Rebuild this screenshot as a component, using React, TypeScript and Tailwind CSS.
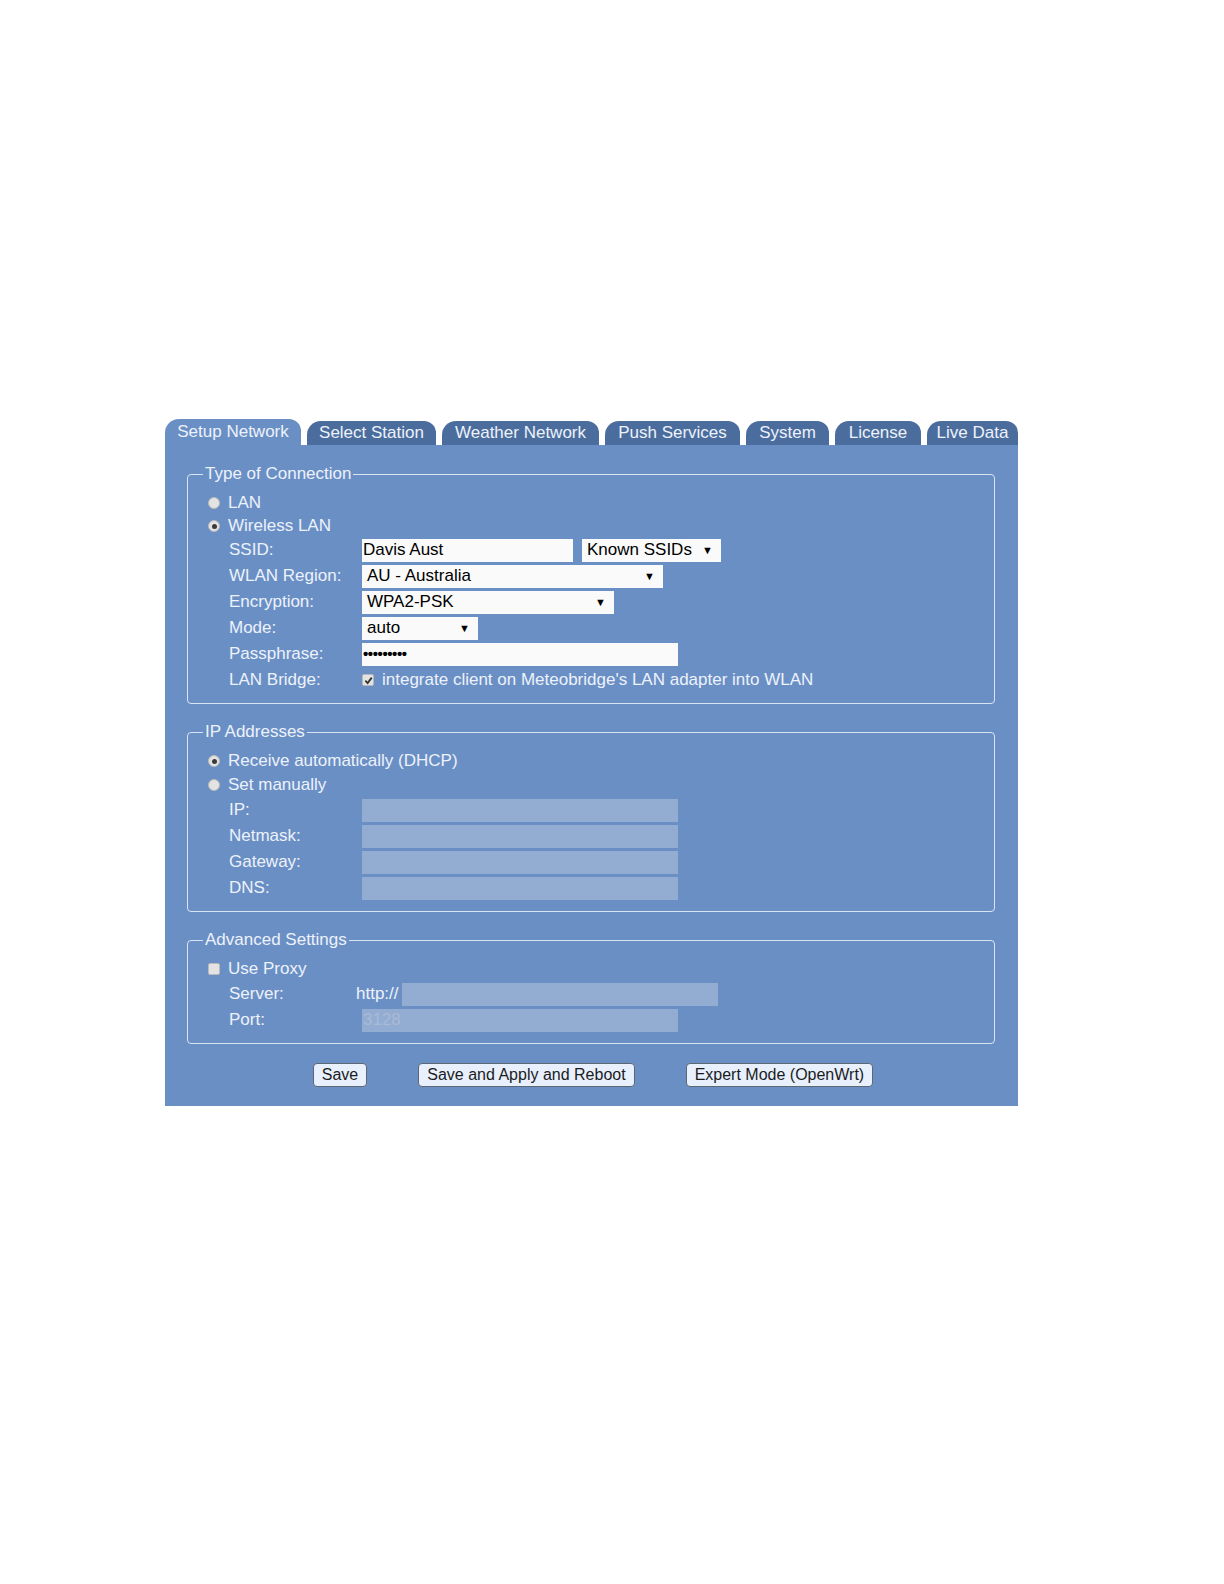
import React from "react"

const tabs = [
  { name: "Setup Network", w: "w-[136px]", active: true },
  { name: "Select Station", w: "w-[129px]" },
  { name: "Weather Network", w: "w-[157px]" },
  { name: "Push Services", w: "w-[135px]" },
  { name: "System", w: "w-[83px]" },
  { name: "License", w: "w-[86px]" },
  { name: "Live Data", w: "w-[91px]" },
]

function Radio({ checked }: { checked?: boolean }) {
  return (
    <span className="w-[12px] h-[12px] rounded-full bg-[#e3e3e3] border border-[#b9b9b9] flex items-center justify-center shrink-0">
      {checked && <span className="w-[5px] h-[5px] rounded-full bg-[#3a3a3a]" />}
    </span>
  )
}

function Checkbox({ checked }: { checked?: boolean }) {
  return (
    <span className="w-[12px] h-[12px] rounded-[2px] bg-[#e3e3e3] border border-[#b9b9b9] flex items-center justify-center shrink-0">
      {checked && (
        <svg width="9" height="9" viewBox="0 0 10 10">
          <path d="M1.5 5.2 L4 7.8 L8.6 1.8" fill="none" stroke="#333" strokeWidth="2" />
        </svg>
      )}
    </span>
  )
}

function Select({ value, w }: { value: string; w: string }) {
  return (
    <div className={`${w} h-[23px] bg-[#fafafa] flex items-center justify-between pl-[5px] pr-[8px] text-black`}>
      <span>{value}</span>
      <span className="text-[11px]">▼</span>
    </div>
  )
}

function Row({ label, children }: { label: string; children?: React.ReactNode }) {
  return (
    <div className="flex items-center h-[26px]">
      <span className="w-[154px] pl-[21px] shrink-0 whitespace-nowrap">{label}</span>
      {children}
    </div>
  )
}

function Fieldset({ title, children }: { title: string; children: React.ReactNode }) {
  return (
    <fieldset className="border-[1.5px] border-[#dbe4f2] rounded-[4px] pl-[20px] pr-[8px] pb-[10px] pt-[8px] m-0 min-w-0">
      <legend className="ml-[-5px] px-[2px] leading-[18px]">{title}</legend>
      {children}
    </fieldset>
  )
}

const disabledBox = "w-[316px] h-[23px] bg-[#93acd2]"

export default function App() {
  return (
    <div
      className="bg-white pt-[419px] pb-[476px] pl-[165px] text-[17px] text-[#edf2fa]"
      style={{ fontFamily: '"Liberation Sans", Arial, sans-serif' }}
    >
      <div className="w-[853px]">
        <div className="flex gap-[6px] h-[26px] items-end">
          {tabs.map((t) => (
            <div
              key={t.name}
              className={`${t.w} rounded-tl-[14px] rounded-tr-[12px] flex items-center justify-center whitespace-nowrap ${
                t.active ? "bg-[#6a8fc5] h-[26px]" : "bg-[#4b6d9e] h-[24px]"
              }`}
            >
              {t.name}
            </div>
          ))}
        </div>
        <div className="bg-[#6a8fc5] pt-[20px] pl-[22px] pr-[23px] pb-[19px] flex flex-col gap-[19px]">
          <Fieldset title="Type of Connection">
            <div className="flex items-center gap-[8px] h-[24px]">
              <Radio />
              <span>LAN</span>
            </div>
            <div className="flex items-center gap-[8px] h-[22px]">
              <Radio checked />
              <span>Wireless LAN</span>
            </div>
            <Row label="SSID:">
              <div className="w-[211px] h-[23px] bg-[#fafafa] text-black flex items-center pl-[1px]">Davis Aust</div>
              <div className="ml-[9px]">
                <Select value="Known SSIDs" w="w-[139px]" />
              </div>
            </Row>
            <Row label="WLAN Region:">
              <Select value="AU - Australia" w="w-[301px]" />
            </Row>
            <Row label="Encryption:">
              <Select value="WPA2-PSK" w="w-[252px]" />
            </Row>
            <Row label="Mode:">
              <Select value="auto" w="w-[116px]" />
            </Row>
            <Row label="Passphrase:">
              <div className="w-[316px] h-[23px] bg-[#fafafa] text-black flex items-center pl-[1px] text-[15px] font-bold tracking-[-0.4px]">
                •••••••••
              </div>
            </Row>
            <Row label="LAN Bridge:">
              <div className="flex items-center gap-[8px]">
                <Checkbox checked />
                <span>integrate client on Meteobridge's LAN adapter into WLAN</span>
              </div>
            </Row>
          </Fieldset>

          <Fieldset title="IP Addresses">
            <div className="flex items-center gap-[8px] h-[24px]">
              <Radio checked />
              <span>Receive automatically (DHCP)</span>
            </div>
            <div className="flex items-center gap-[8px] h-[24px]">
              <Radio />
              <span>Set manually</span>
            </div>
            <Row label="IP:">
              <div className={disabledBox} />
            </Row>
            <Row label="Netmask:">
              <div className={disabledBox} />
            </Row>
            <Row label="Gateway:">
              <div className={disabledBox} />
            </Row>
            <Row label="DNS:">
              <div className={disabledBox} />
            </Row>
          </Fieldset>

          <Fieldset title="Advanced Settings">
            <div className="flex items-center gap-[8px] h-[24px]">
              <Checkbox />
              <span>Use Proxy</span>
            </div>
            <div className="flex items-center h-[26px]">
              <span className="w-[148px] pl-[21px] shrink-0">Server:</span>
              <span className="w-[46px] shrink-0">http://</span>
              <div className="w-[316px] h-[23px] bg-[#93acd2]" />
            </div>
            <Row label="Port:">
              <div className="w-[316px] h-[23px] bg-[#93acd2] text-[#a9bad6] flex items-center pl-[1px]">3128</div>
            </Row>
          </Fieldset>

          <div className="flex justify-center gap-[51px] pl-[4px]">
            {["Save", "Save and Apply and Reboot", "Expert Mode (OpenWrt)"].map((b) => (
              <button
                key={b}
                className="h-[24px] px-[8px] rounded-[4px] bg-[#e7f0fc] border border-[#5d6673] text-[#1c1c1c] text-[16px] leading-none"
              >
                {b}
              </button>
            ))}
          </div>
        </div>
      </div>
    </div>
  )
}
